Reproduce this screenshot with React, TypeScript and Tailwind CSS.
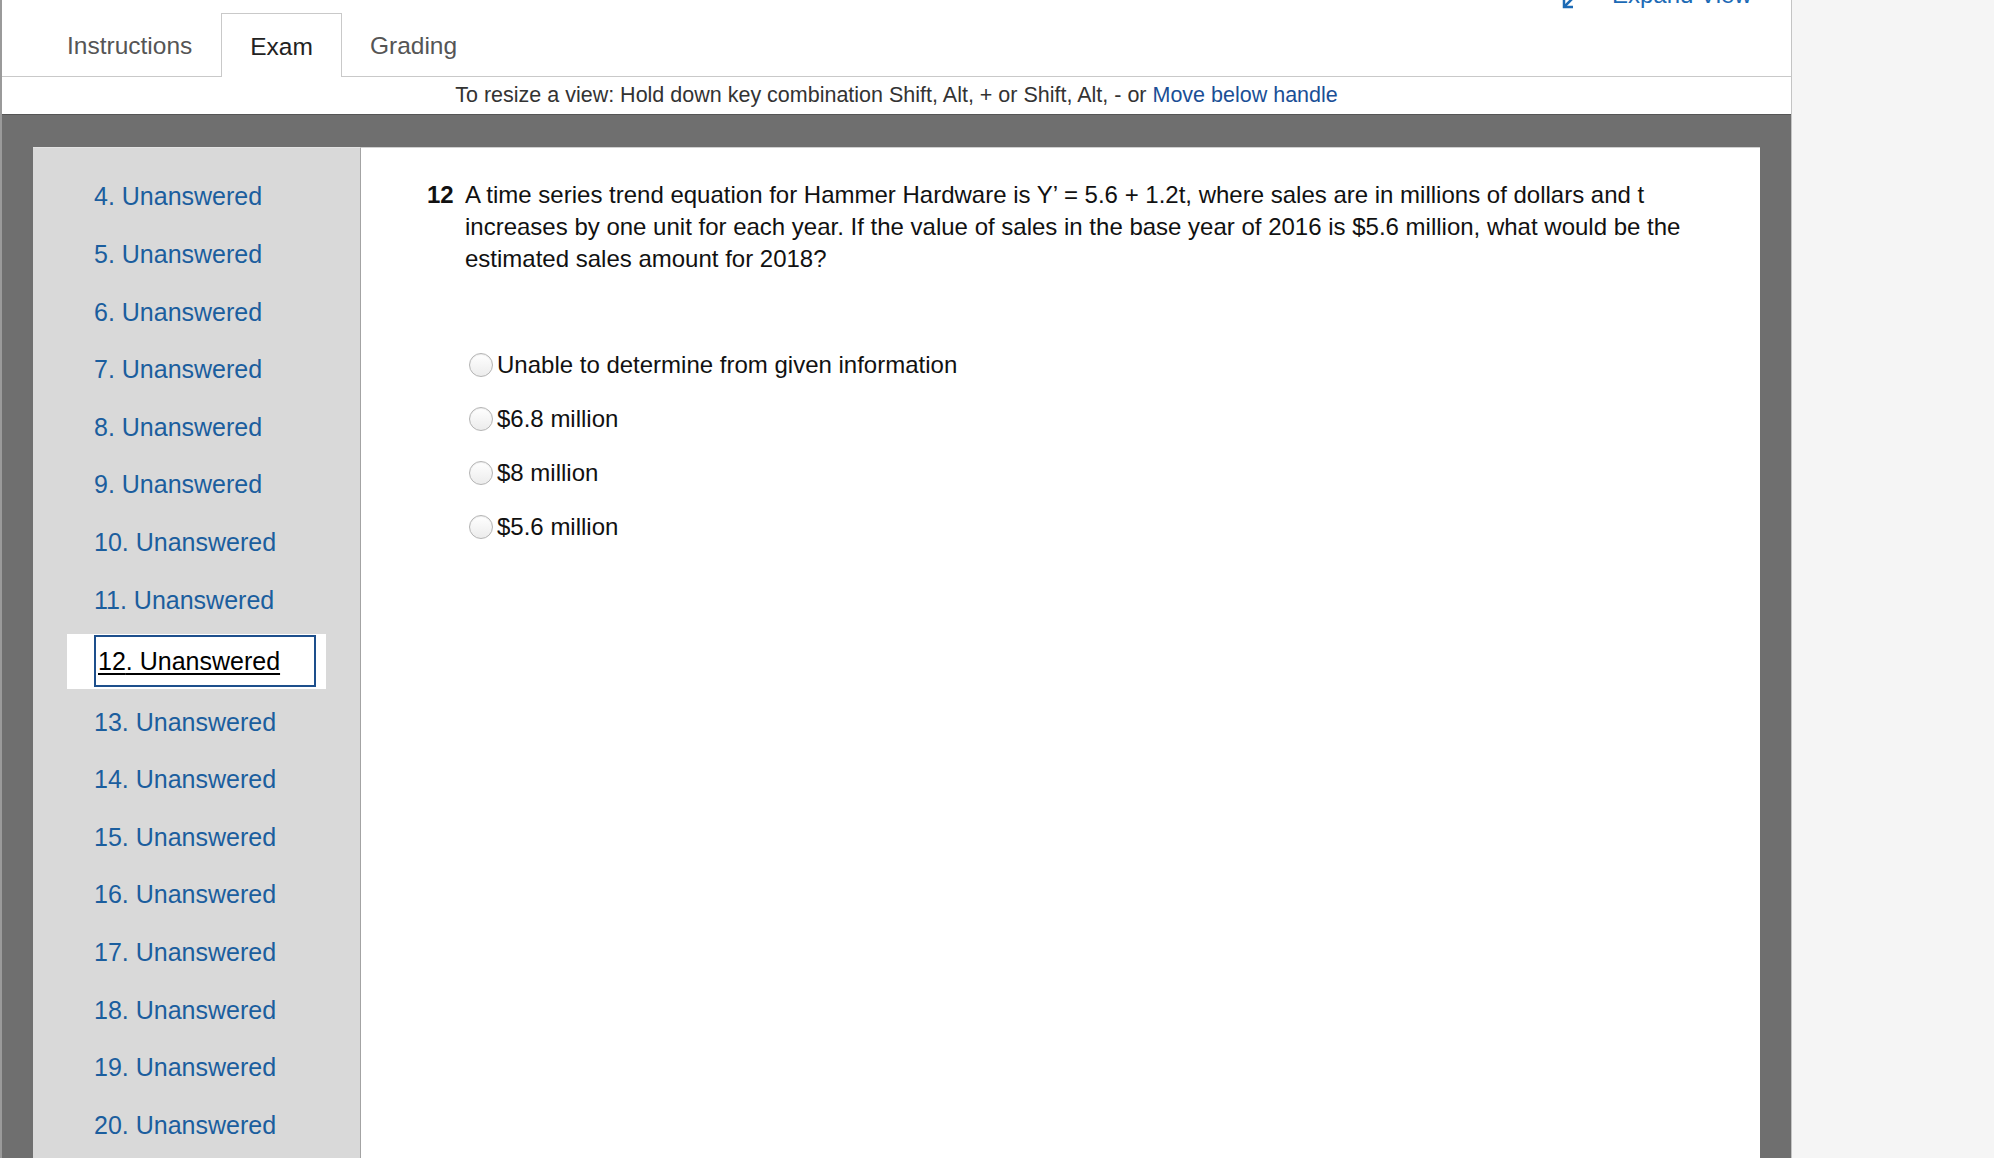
import React from "react";

const font = { fontFamily: '"Liberation Sans", Arial, Helvetica, sans-serif' };

const items = [3, 4, 5, 6, 7, 8, 9, 10, 11, 12, 13, 14, 15, 16, 17, 18, 19, 20, 21, 22];

const options = [
  "Unable to determine from given information",
  "$6.8 million",
  "$8 million",
  "$5.6 million",
];

function Tabs() {
  return (
    <div className="relative h-[77px] border-b border-[#c9c9c9] flex items-end pl-[36px]">
      <div className="absolute top-[-23px] left-[1559px] flex items-center gap-[37px] text-[24px] text-[#1c6ab5]">
        <svg width="14" height="24" viewBox="0 0 14 24" className="mt-[4px]">
          <path d="M3 12 L3 22 L12 22" stroke="#1c6ab5" strokeWidth="2.5" fill="none" />
          <path d="M3 22 L12 13" stroke="#1c6ab5" strokeWidth="2.5" fill="none" />
        </svg>
        <span>Expand View</span>
      </div>
      <div className="h-[63px] px-[29px] pt-[4px] flex items-center text-[24.5px] text-[#555]">Instructions</div>
      <div className="h-[64px] -mb-px px-[28px] pt-[4px] flex items-center text-[24.5px] text-[#222] bg-white border border-b-0 border-[#c9c9c9]">
        Exam
      </div>
      <div className="h-[63px] px-[28px] pt-[4px] flex items-center text-[24.5px] text-[#555]">Grading</div>
    </div>
  );
}

function Sidebar() {
  return (
    <div className="w-[328px] shrink-0 bg-[#d9d9d9] border-r border-[#a3a3a3] border-t border-t-[#e2e2e2] overflow-hidden">
      <div className="mt-[-37.2px] flex flex-col">
        {items.map((n) =>
          n === 12 ? (
            <div key={n} className="h-[64.4px] flex items-center shrink-0">
              <div className="ml-[34px] w-[259px] h-[55px] bg-white flex items-center">
                <div className="ml-[27px] w-[222px] h-[52px] border-[2.5px] border-[#1d4f8c] flex items-center pl-[2px]">
                  <span className="text-[25px] text-black underline decoration-[1.5px] underline-offset-[3px]">
                    {n}. Unanswered
                  </span>
                </div>
              </div>
            </div>
          ) : (
            <div key={n} className="h-[57.6px] shrink-0 flex items-center pl-[61px] text-[25px] text-[#1b5e9e]">
              {n}. Unanswered
            </div>
          )
        )}
      </div>
    </div>
  );
}

function Question() {
  return (
    <div className="flex-1 bg-white border-t border-[#d0d0d0] pl-[66px] pr-[70px] pt-[31px]">
      <div className="flex text-[24px] leading-[32px] text-[#111]">
        <span className="font-bold w-[38px] shrink-0">12</span>
        <p>
          A time series trend equation for Hammer Hardware is Y’ = 5.6 + 1.2t, where sales are in millions of dollars and t
          increases by one unit for each year. If the value of sales in the base year of 2016 is $5.6 million, what would be the
          estimated sales amount for 2018?
        </p>
      </div>
      <div className="mt-[78px] ml-[42px] flex flex-col gap-[30px]">
        {options.map((o) => (
          <label key={o} className="flex items-center h-[24px] text-[24px] text-[#111]">
            <span className="w-[24px] h-[24px] rounded-full border border-[#b4b4b4] bg-gradient-to-b from-white to-[#ececec] shadow-[inset_0_1px_1px_rgba(0,0,0,0.08)] mr-[4px] shrink-0" />
            {o}
          </label>
        ))}
      </div>
    </div>
  );
}

export default function App() {
  return (
    <div className="flex h-[1158px] overflow-hidden bg-[#f5f5f5]" style={font}>
      <div className="w-[1792px] shrink-0 flex flex-col bg-white border-l-2 border-l-[#9a9a9a] border-r border-r-[#c4c4c4]">
        <Tabs />
        <div className="h-[37px] shrink-0 flex items-center justify-center text-[21.5px] text-[#333]">
          <span>
            To resize a view: Hold down key combination Shift, Alt, + or Shift, Alt, - or{" "}
            <span className="text-[#1a4f96]">Move below handle</span>
          </span>
        </div>
        <div className="flex-1 min-h-0 flex bg-[#6f6f6f] border-t border-[#555] pt-[32px] px-[31px]">
          <Sidebar />
          <Question />
        </div>
      </div>
    </div>
  );
}
